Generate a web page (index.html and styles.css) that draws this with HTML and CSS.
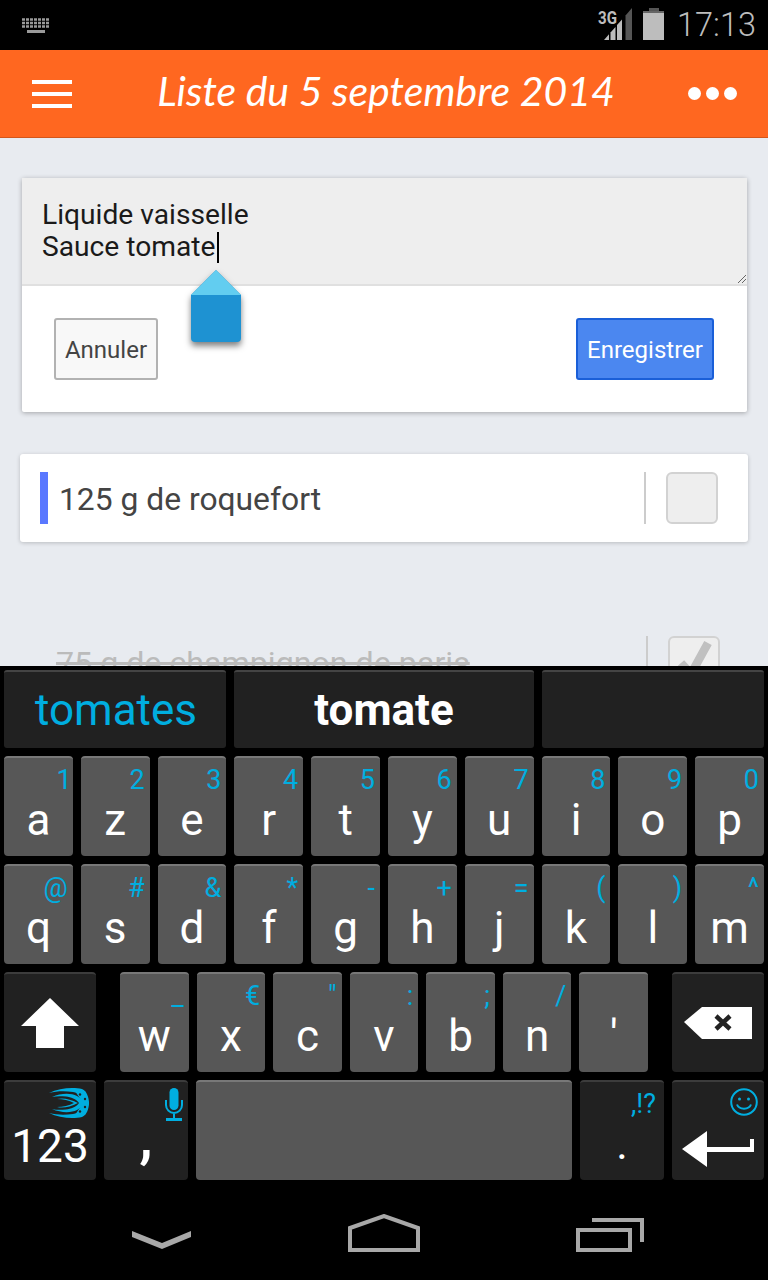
FILE: index.html
```html
<!DOCTYPE html>
<html lang="fr">

<head>
    <meta charset="UTF-8">
    <meta name="viewport" content="width=device-width, initial-scale=1.0">
    <title>Liste du 5 septembre 2014</title>
    <link rel="stylesheet" href="styles.css">
</head>

<body>
    <header class="status">
        <svg class="status-kb" width="28" height="15" viewBox="0 0 28 15">
            <path d="M0 1.500H28M0 5H28M0 8.500H28" stroke="#9a9a9a" stroke-width="2.600" stroke-dasharray="3 1" />
            <rect x="5" y="12" width="18" height="3" fill="#9a9a9a" />
        </svg>
        <svg class="status-signal" width="36" height="36" viewBox="0 -4 36 36">
            <polygon points="7,32 12,32 12,26.300 7,32" fill="#bdbdbd" />
            <polygon points="13.500,32 18.500,32 18.500,18.900 13.500,24.600" fill="#bdbdbd" />
            <polygon points="20,32 25,32 25,11.400 20,17.100" fill="#bdbdbd" />
            <polygon points="28.500,32 35,32 35,0 28.500,7.400" fill="#555" />
            <text class="status-3g" x="1" y="16" textLength="19" lengthAdjust="spacingAndGlyphs">3G</text>
        </svg>
        <svg class="status-battery" width="21" height="32" viewBox="0 0 21 32">
            <rect x="6" y="0" width="10" height="5" fill="#555" />
            <rect x="0" y="3" width="21" height="3" fill="#666" />
            <rect x="0" y="5" width="21" height="27" fill="#bdbdbd" />
        </svg>
        <span class="status-time">17:13</span>
    </header>

    <nav class="appbar">
        <div class="menu"><i></i><i></i><i></i></div>
        <h1 class="title">Liste du 5 septembre 2014</h1>
        <div class="more"><i></i><i></i><i></i></div>
    </nav>

    <main class="content">
        <form class="editor">
            <div class="field">Liquide vaisselle<br>Sauce tomate<span class="caret"></span>
                <svg class="grip" width="8" height="8" viewBox="0 0 8 8">
                    <path d="M0 8L8 0M4 8L8 4" stroke="#666" stroke-width="1" />
                </svg>
            </div>
            <div class="actions">
                <button type="button" class="btn btn-cancel">Annuler</button>
                <button type="button" class="btn btn-save">Enregistrer</button>
            </div>
            <svg class="handle" width="50" height="72" viewBox="0 0 50 72">
                <path d="M25 0L50 25V68Q50 72 46 72H4Q0 72 0 68V25Z" fill="#1e92d2" />
                <path d="M25 0L50 25H0Z" fill="#62cdf0" />
            </svg>
        </form>

        <section class="item">
            <span class="mark"></span>
            <span class="item-name">125 g de roquefort</span>
            <span class="divider"></span>
            <span class="check"></span>
        </section>

        <section class="item item-done">
            <span class="item-name">75 g de champignon de paris</span>
            <span class="divider"></span>
            <span class="check">
                <svg width="52" height="52" viewBox="0 0 52 52">
                    <path d="M13 27L23 38L40 7" fill="none" stroke="#c0c0c0" stroke-width="8.500" />
                </svg>
            </span>
        </section>
    </main>

    <section class="keyboard">
        <div class="suggestions">
            <div class="sugg sugg-alt">tomates</div>
            <div class="sugg sugg-main">tomate</div>
            <div class="sugg"></div>
        </div>

        <div class="row">
            <div class="key"><span class="alt alt-one">1</span><span class="main">a</span></div>
            <div class="key"><span class="alt">2</span><span class="main">z</span></div>
            <div class="key"><span class="alt">3</span><span class="main">e</span></div>
            <div class="key"><span class="alt">4</span><span class="main">r</span></div>
            <div class="key"><span class="alt">5</span><span class="main">t</span></div>
            <div class="key"><span class="alt">6</span><span class="main">y</span></div>
            <div class="key"><span class="alt">7</span><span class="main">u</span></div>
            <div class="key"><span class="alt">8</span><span class="main">i</span></div>
            <div class="key"><span class="alt">9</span><span class="main">o</span></div>
            <div class="key"><span class="alt">0</span><span class="main">p</span></div>
        </div>
        <div class="row">
            <div class="key"><span class="alt">@</span><span class="main">q</span></div>
            <div class="key"><span class="alt">#</span><span class="main">s</span></div>
            <div class="key"><span class="alt">&amp;</span><span class="main">d</span></div>
            <div class="key"><span class="alt">*</span><span class="main">f</span></div>
            <div class="key"><span class="alt">-</span><span class="main">g</span></div>
            <div class="key"><span class="alt">+</span><span class="main">h</span></div>
            <div class="key"><span class="alt">=</span><span class="main">j</span></div>
            <div class="key"><span class="alt">(</span><span class="main">k</span></div>
            <div class="key"><span class="alt">)</span><span class="main">l</span></div>
            <div class="key"><span class="alt">^</span><span class="main">m</span></div>
        </div>
        <div class="row">
            <div class="key key-dark key-wide key-shift">
                <svg width="58" height="50" viewBox="0 0 58 50">
                    <path d="M29 0L58 28H43V50H15V28H0Z" fill="#fff" />
                </svg>
            </div>
            <div class="key"><span class="alt">_</span><span class="main">w</span></div>
            <div class="key"><span class="alt">€</span><span class="main">x</span></div>
            <div class="key"><span class="alt">"</span><span class="main">c</span></div>
            <div class="key"><span class="alt">:</span><span class="main">v</span></div>
            <div class="key"><span class="alt">;</span><span class="main">b</span></div>
            <div class="key"><span class="alt">/</span><span class="main">n</span></div>
            <div class="key"><span class="alt">&nbsp;</span><span class="main">'</span></div>
            <div class="key key-dark key-wide key-back">
                <svg width="68" height="32" viewBox="0 0 68 32">
                    <path d="M0 15L18 0H68V32H18Z" fill="#fff" />
                    <path d="M32 9L46 22M46 9L32 22" stroke="#222" stroke-width="4.500" />
                </svg>
            </div>
        </div>
        <div class="row">
            <div class="key key-dark key-wide">
                <div class="alt-icon">
                    <svg width="40" height="30" viewBox="0 0 40 30">
                        <g fill="#00aee0">
                            <path d="M0 5C10 0 24-1 33 1C38 3 40 10 40 15H36C35 9 30 5 24 4C16 3 8 3 0 5Z" />
                            <path d="M3 9C12 5 22 5 28 8C32 10 34 13 35 15H30C27 11 22 9 17 8.500C12 8 7 8 3 9Z" />
                            <path d="M8 11C14 9.500 21 11 29 15H25C20 12.500 14 11 8 11Z" />
                            <g transform="matrix(1 0 0 -1 0 30)">
                                <path d="M0 5C10 0 24-1 33 1C38 3 40 10 40 15H36C35 9 30 5 24 4C16 3 8 3 0 5Z" />
                                <path d="M3 9C12 5 22 5 28 8C32 10 34 13 35 15H30C27 11 22 9 17 8.500C12 8 7 8 3 9Z" />
                                <path d="M8 11C14 9.500 21 11 29 15H25C20 12.500 14 11 8 11Z" />
                            </g>
                            <path d="M26 3L36 3L40 15L36 27L26 27L34 15Z" />
                        </g>
                        <g fill="#212121">
                            <circle cx="31" cy="6.500" r="1.200" />
                            <circle cx="36" cy="11" r="1.200" />
                            <circle cx="36" cy="19" r="1.200" />
                            <circle cx="31" cy="23.500" r="1.200" />
                        </g>
                    </svg>
                </div>
                <span class="main main-num">123</span>
            </div>
            <div class="key key-dark key-side">
                <div class="alt-icon alt-mic">
                    <svg width="18" height="34" viewBox="0 0 18 34">
                        <rect x="4.500" y="0" width="9" height="22" rx="4.500" fill="#00aee0" />
                        <path d="M1 12V17A8 8 0 0 0 17 17V12M9 25V31" fill="none" stroke="#00aee0" stroke-width="2" />
                        <rect x="1" y="30" width="16" height="3" fill="#00aee0" />
                    </svg>
                </div>
                <span class="main main-comma">,</span>
            </div>
            <div class="key key-space"></div>
            <div class="key key-dark key-side"><span class="alt alt-punct">,!?</span><span class="main">.</span></div>
            <div class="key key-dark key-wide">
                <div class="alt-icon alt-smile">
                    <svg width="28" height="28" viewBox="0 0 28 28">
                        <circle cx="14" cy="14" r="12.800" fill="none" stroke="#00aee0" stroke-width="2" />
                        <circle cx="9.500" cy="11" r="1.500" fill="#00aee0" />
                        <circle cx="18.500" cy="11" r="1.500" fill="#00aee0" />
                        <path d="M7 16.500C9 22 19 22 21 16.500" fill="none" stroke="#00aee0" stroke-width="2" />
                    </svg>
                </div>
                <svg class="enter" width="72" height="36" viewBox="0 0 72 36">
                    <path d="M0 18L25 0V16H68V8H72V21H25V36Z" fill="#fff" />
                </svg>
            </div>
        </div>
    </section>

    <footer class="navbar">
        <svg width="59" height="18" viewBox="0 0 59 18">
            <path d="M0 0L30 12L59 0V6L30 18L0 6Z" fill="#a8a8a8" />
        </svg>
        <svg width="72" height="38" viewBox="0 0 72 38">
            <path d="M2 36V14L36 2L70 14V36Z" fill="none" stroke="#a8a8a8" stroke-width="4" />
        </svg>
        <svg width="68" height="34" viewBox="0 0 68 34">
            <path d="M16 2H66V24" fill="none" stroke="#a8a8a8" stroke-width="4" />
            <rect x="2" y="12" width="52" height="20" fill="none" stroke="#a8a8a8" stroke-width="4" />
        </svg>
    </footer>
</body>

</html>
```

FILE: styles.css
```css
* {
    margin: 0;
    padding: 0;
    box-sizing: border-box;
}

body {
    width: 768px;
    height: 1280px;
    overflow: hidden;
    display: flex;
    flex-direction: column;
    background-color: #000;
    font-family: Roboto, "Liberation Sans", sans-serif;
}

/* status bar */
.status {
    height: 50px;
    display: flex;
    align-items: flex-start;
    background-color: #000;
}

.status-kb {
    margin: 18px 0 0 22px;
}

.status-signal {
    margin: 4px 0 0 547px;
}

.status-3g {
    font-size: 19px;
    font-weight: 700;
    fill: #bdbdbd;
}

.status-battery {
    margin: 8px 0 0 10px;
}

.status-time {
    margin-left: 13px;
    font-size: 32.500px;
    font-weight: 300;
    line-height: 50px;
    color: #bdbdbd;
}

/* orange bar */
.appbar {
    height: 88px;
    display: flex;
    align-items: center;
    padding: 0 31px 0 32px;
    background-color: #ff6720;
    border-bottom: 1px solid #d2561c;
}

.menu {
    width: 40px;
    height: 28px;
    display: flex;
    flex-direction: column;
    justify-content: space-between;
}

.menu i {
    height: 4px;
    background-color: #fff;
}

.title {
    flex: 1;
    padding: 0 0 6px 12px;
    text-align: center;
    font-family: Lato, sans-serif;
    font-size: 41px;
    font-style: italic;
    font-weight: 400;
    color: #fff;
}

.more {
    width: 49px;
    display: flex;
    justify-content: space-between;
}

.more i {
    width: 13px;
    height: 13px;
    border-radius: 50%;
    background-color: #fff;
}

/* list */
.content {
    height: 528px;
    overflow: hidden;
    padding: 40px 20px 0;
    background-color: #e8ebf0;
}

.editor {
    position: relative;
    margin: 0 1px 0 2px;
    height: 234px;
    background-color: #fff;
    border-radius: 2px;
    box-shadow: 0 1px 5px rgba(0, 0, 0, .3);
}

.field {
    position: relative;
    height: 108px;
    padding: 21px 20px 0;
    background-color: #eee;
    border-bottom: 2px solid #e0e0e0;
    font-size: 28.200px;
    line-height: 32px;
    color: #1a1a1a;
}

.caret {
    display: inline-block;
    width: 2px;
    height: 31px;
    margin-left: 1px;
    vertical-align: -7px;
    background-color: #000;
}

.grip {
    position: absolute;
    right: 1px;
    bottom: 1px;
}

.actions {
    display: flex;
    justify-content: space-between;
    padding: 32px 33px 0 32px;
}

.btn {
    height: 62px;
    padding-top: 2px;
    border-radius: 3px;
    font-family: inherit;
    font-size: 24px;
}

.btn-cancel {
    width: 104px;
    border: 2px solid #b2b2b2;
    background-color: #f8f8f8;
    color: #444;
}

.btn-save {
    width: 138px;
    border: 2px solid #1a5fd8;
    background-color: #4b87f0;
    color: #fff;
}

.handle {
    position: absolute;
    left: 169px;
    top: 92px;
    filter: drop-shadow(0 4px 3px rgba(0, 0, 0, .5));
}

.item {
    height: 88px;
    margin-top: 42px;
    display: flex;
    align-items: center;
    padding: 0 30px 0 20px;
    background-color: #fff;
    border-radius: 3px;
    box-shadow: 0 1px 4px rgba(0, 0, 0, .2);
}

.mark {
    width: 8px;
    height: 52px;
    margin-right: 11px;
    background-color: #5a78ff;
}

.item-name {
    flex: 1;
    padding-top: 2px;
    font-size: 31.800px;
    color: #444;
}

.divider {
    width: 2px;
    height: 52px;
    margin-right: 20px;
    background-color: #ccc;
}

.check {
    width: 52px;
    height: 52px;
    border: 2px solid #d2d2d2;
    border-radius: 6px;
    background-color: #eee;
}

.check svg {
    display: block;
    margin: -2px;
}

.item-done {
    margin-top: 76px;
    padding: 0 28px 0 36px;
    background: none;
    box-shadow: none;
}

.item-done .item-name {
    font-size: 32.200px;
    color: #bbb;
    text-decoration: line-through;
}

/* keyboard */
.keyboard {
    height: 514px;
    display: flex;
    flex-direction: column;
    gap: 8px;
    padding: 4px 4px 0;
    background-color: #000;
}

.suggestions {
    height: 78px;
    display: flex;
    gap: 8px;
}

.sugg {
    width: 222px;
    border-top: 2px solid #444;
    border-radius: 3px;
    background-color: #212121;
    text-align: center;
    font-size: 44px;
    line-height: 76px;
}

.sugg-alt {
    padding-left: 2px;
    color: #00aee0;
}

.sugg-main {
    width: 300px;
    font-weight: 700;
    color: #fff;
}

.row {
    height: 100px;
    display: flex;
    gap: 8px;
}

.key {
    flex: 1;
    min-width: 0;
    border-top: 2px solid #787878;
    border-radius: 4px;
    background-color: #575757;
    color: #fff;
}

.key-dark {
    flex: none;
    border-top-color: #3c3c3c;
    background-color: #212121;
}

.key-wide {
    width: 92px;
}

.key-side {
    width: 84px;
}

.key-shift {
    margin-right: 16px;
    padding: 24px 0 0 17px;
}

.key-back {
    margin-left: 16px;
    padding: 33px 0 0 12px;
}

.key-shift svg,
.key-back svg,
.enter {
    display: block;
}

.key-space {
    flex: 1;
}

.alt {
    display: block;
    padding: 7px 5px 0 0;
    text-align: right;
    font-size: 27px;
    line-height: 30px;
    color: #00aee0;
}

.alt-one {
    padding-right: 1px;
}

.main {
    display: block;
    text-align: center;
    font-size: 44px;
    line-height: 50px;
}

.alt-icon {
    height: 37px;
    display: flex;
    justify-content: flex-end;
    padding: 6px 7px 0 0;
}

.alt-mic {
    padding-right: 5px;
}

.alt-smile {
    padding-right: 6px;
}

.main-num {
    margin-top: 2px;
    font-size: 46px;
}

.main-comma {
    margin-top: -7px;
    font-size: 60px;
    font-weight: 500;
}

.alt-punct {
    padding-right: 8px;
}

.enter {
    margin: 12px 0 0 10px;
}

/* navigation */
.navbar {
    height: 100px;
    display: flex;
    align-items: flex-start;
    gap: 157px;
    padding: 34px 0 0 132px;
    background-color: #000;
}

.navbar svg:nth-child(1) {
    margin-top: 17px;
}

.navbar svg:nth-child(3) {
    margin: 4px 0 0 -1px;
}
```
